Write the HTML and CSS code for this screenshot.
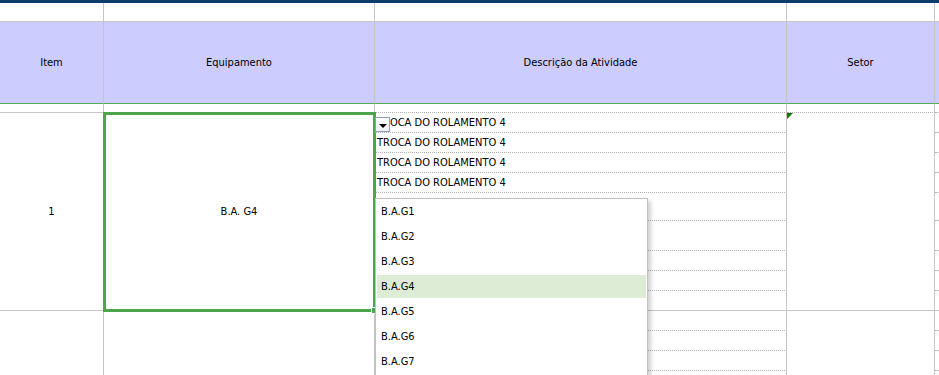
FILE: index.html
```html
<!DOCTYPE html>
<html lang="pt">
<head>
<meta charset="utf-8">
<title>Planilha</title>
<link rel="stylesheet" href="styles.css">
</head>
<body>
<div class="sheet">
  <div class="topbar"></div>
  <div class="grid">
    <!-- row 1 -->
    <div class="c"></div><div class="c"></div><div class="c"></div><div class="c"></div><div class="c last"></div>
    <!-- header -->
    <div class="c head">Item</div>
    <div class="c head">Equipamento</div>
    <div class="c head">Descrição da Atividade</div>
    <div class="c head">Setor</div>
    <div class="c head last"></div>
    <!-- gap row -->
    <div class="c"></div><div class="c"></div><div class="c dot"></div><div class="c dot"></div><div class="c dot last"></div>
    <!-- body row 1 -->
    <div class="c merged center">1</div>
    <div class="c merged center sel-cell">B.A. G4
      <div class="selection"></div>
      <div class="fill-handle"></div>
    </div>
    <div class="c dot desc anchor">TROCA DO ROLAMENTO 4
      <div class="dd-btn"><span class="tri"></span></div>
      <ul class="dd-list">
        <li>B.A.G1</li>
        <li>B.A.G2</li>
        <li>B.A.G3</li>
        <li class="active">B.A.G4</li>
        <li>B.A.G5</li>
        <li>B.A.G6</li>
        <li>B.A.G7</li>
      </ul>
    </div>
    <div class="c merged setor"><span class="note"></span></div>
    <div class="c dot last"></div>
    <!-- body rows 2..9 -->
    <div class="c dot desc">TROCA DO ROLAMENTO 4</div><div class="c dot last"></div>
    <div class="c dot desc">TROCA DO ROLAMENTO 4</div><div class="c dot last"></div>
    <div class="c dot desc">TROCA DO ROLAMENTO 4</div><div class="c dot last"></div>
    <div class="c dot desc"></div><div class="c dot last"></div>
    <div class="c dot desc"></div><div class="c dot last"></div>
    <div class="c dot desc"></div><div class="c dot last"></div>
    <div class="c dot desc"></div><div class="c dot last"></div>
    <div class="c desc"></div><div class="c last"></div>
    <!-- lower block -->
    <div class="c merged-low"></div>
    <div class="c merged-low"></div>
    <div class="c dot desc"></div>
    <div class="c merged-low"></div>
    <div class="c dot last"></div>
    <div class="c dot desc"></div><div class="c dot last"></div>
    <div class="c dot desc"></div><div class="c dot last"></div>
    <div class="c dot desc"></div><div class="c dot last"></div>
  </div>
</div>
</body>
</html>
```

FILE: styles.css
```css
html, body {
  margin: 0;
  padding: 0;
  background: #ffffff;
  overflow: hidden;
}

.sheet {
  width: 939px;
  height: 375px;
  overflow: hidden;
  font-family: "DejaVu Sans Condensed", "DejaVu Sans", sans-serif;
  font-size: 11px;
  color: #000000;
}

.topbar {
  height: 3px;
  background: #0e3a6c;
}

.grid {
  display: grid;
  grid-template-columns: 104px 271px 412px 148px 1fr;
  grid-template-rows: 19px 82px 9px 20px 20px 20px 20px 28px 30px 20px 20px 20px 20px 20px 20px 20px;
}

.c {
  box-sizing: border-box;
  border-right: 1px solid #c6c6c6;
  border-bottom: 1px solid #c6c6c6;
  display: flex;
  align-items: center;
  white-space: nowrap;
  min-width: 0;
}

.c.last {
  border-right: none;
}

.head {
  background: #ccccff;
  justify-content: center;
  border-bottom-color: #5aa85a;
  border-right-color: #c4c4cc;
}

.dot {
  border-bottom: 1px dotted #b0b0b0;
}

.desc {
  padding-left: 2px;
}

.merged {
  grid-row: span 9;
}

.merged-low {
  grid-row: span 4;
  border-bottom: none;
}

.center {
  justify-content: center;
}

.sel-cell,
.anchor,
.setor {
  position: relative;
}

.setor {
  align-items: flex-start;
}

.selection {
  position: absolute;
  left: -1px;
  top: -1px;
  width: 273px;
  height: 200px;
  box-sizing: border-box;
  border: 3px solid #4ca54c;
  pointer-events: none;
}

.fill-handle {
  position: absolute;
  left: 267px;
  top: 194px;
  width: 5px;
  height: 5px;
  background: #4ca54c;
  border: 1px solid #ffffff;
}

.note {
  position: absolute;
  left: 0;
  top: 0;
  width: 0;
  height: 0;
  border-top: 6px solid #007a00;
  border-right: 6px solid transparent;
}

.dd-btn {
  position: absolute;
  left: 0;
  top: 4px;
  width: 15px;
  height: 15px;
  box-sizing: border-box;
  border: 1px solid #8fa0b6;
  background: linear-gradient(#ffffff, #eef1f5);
  display: flex;
  align-items: center;
  justify-content: center;
  z-index: 5;
}

.tri {
  display: block;
  width: 0;
  height: 0;
  margin-top: 2px;
  border-left: 4px solid transparent;
  border-right: 4px solid transparent;
  border-top: 4px solid #000000;
}

.dd-list {
  position: absolute;
  left: 0;
  top: 85px;
  width: 273px;
  height: 200px;
  margin: 0;
  padding: 0 1px;
  list-style: none;
  box-sizing: border-box;
  background: #ffffff;
  border: 1px solid #c2c2c2;
  box-shadow: 3px 3px 4px rgba(0, 0, 0, 0.18);
  z-index: 10;
  display: flex;
  flex-direction: column;
}

.dd-list li {
  flex: 0 0 23px;
  margin: 1px 0;
  padding-left: 4px;
  display: flex;
  align-items: center;
}

.dd-list li.active {
  background: #ddedd5;
}
```
